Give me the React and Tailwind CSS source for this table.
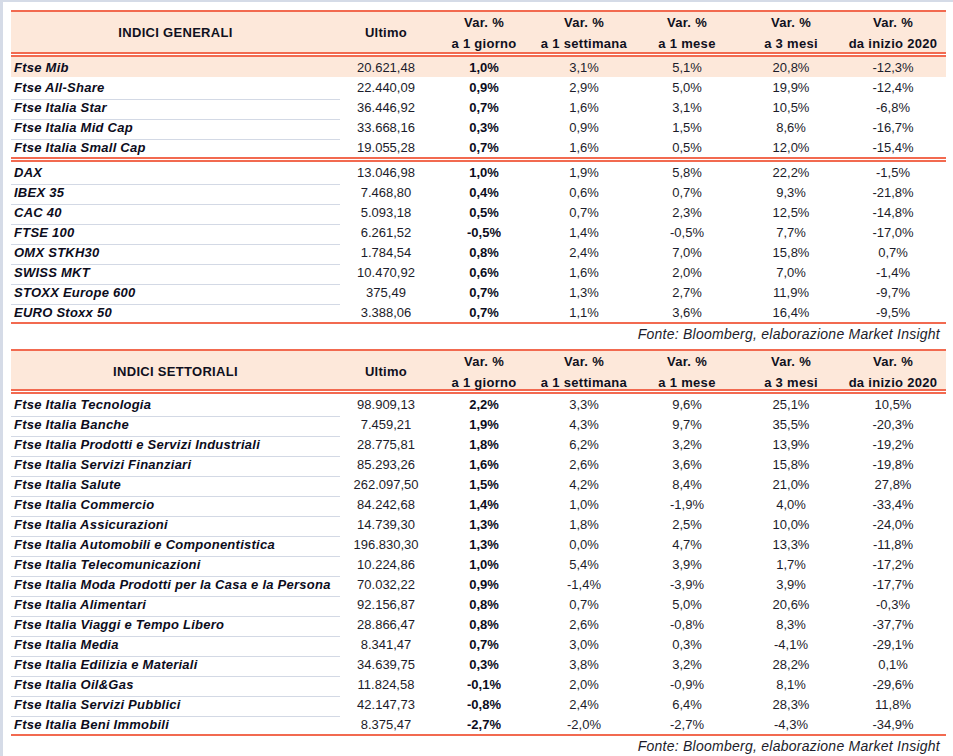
import React from 'react';

const cols = 'grid grid-cols-[329px_92px_104px_96px_110px_98px_106px]';

const generali = [
  ['Ftse Mib', '20.621,48', '1,0%', '3,1%', '5,1%', '20,8%', '-12,3%'],
  ['Ftse All-Share', '22.440,09', '0,9%', '2,9%', '5,0%', '19,9%', '-12,4%'],
  ['Ftse Italia Star', '36.446,92', '0,7%', '1,6%', '3,1%', '10,5%', '-6,8%'],
  ['Ftse Italia Mid Cap', '33.668,16', '0,3%', '0,9%', '1,5%', '8,6%', '-16,7%'],
  ['Ftse Italia Small Cap', '19.055,28', '0,7%', '1,6%', '0,5%', '12,0%', '-15,4%'],
];

const esteri = [
  ['DAX', '13.046,98', '1,0%', '1,9%', '5,8%', '22,2%', '-1,5%'],
  ['IBEX 35', '7.468,80', '0,4%', '0,6%', '0,7%', '9,3%', '-21,8%'],
  ['CAC 40', '5.093,18', '0,5%', '0,7%', '2,3%', '12,5%', '-14,8%'],
  ['FTSE 100', '6.261,52', '-0,5%', '1,4%', '-0,5%', '7,7%', '-17,0%'],
  ['OMX STKH30', '1.784,54', '0,8%', '2,4%', '7,0%', '15,8%', '0,7%'],
  ['SWISS MKT', '10.470,92', '0,6%', '1,6%', '2,0%', '7,0%', '-1,4%'],
  ['STOXX Europe 600', '375,49', '0,7%', '1,3%', '2,7%', '11,9%', '-9,7%'],
  ['EURO Stoxx 50', '3.388,06', '0,7%', '1,1%', '3,6%', '16,4%', '-9,5%'],
];

const settoriali = [
  ['Ftse Italia Tecnologia', '98.909,13', '2,2%', '3,3%', '9,6%', '25,1%', '10,5%'],
  ['Ftse Italia Banche', '7.459,21', '1,9%', '4,3%', '9,7%', '35,5%', '-20,3%'],
  ['Ftse Italia Prodotti e Servizi Industriali', '28.775,81', '1,8%', '6,2%', '3,2%', '13,9%', '-19,2%'],
  ['Ftse Italia Servizi Finanziari', '85.293,26', '1,6%', '2,6%', '3,6%', '15,8%', '-19,8%'],
  ['Ftse Italia Salute', '262.097,50', '1,5%', '4,2%', '8,4%', '21,0%', '27,8%'],
  ['Ftse Italia Commercio', '84.242,68', '1,4%', '1,0%', '-1,9%', '4,0%', '-33,4%'],
  ['Ftse Italia Assicurazioni', '14.739,30', '1,3%', '1,8%', '2,5%', '10,0%', '-24,0%'],
  ['Ftse Italia Automobili e Componentistica', '196.830,30', '1,3%', '0,0%', '4,7%', '13,3%', '-11,8%'],
  ['Ftse Italia Telecomunicazioni', '10.224,86', '1,0%', '5,4%', '3,9%', '1,7%', '-17,2%'],
  ['Ftse Italia Moda Prodotti per la Casa e la Persona', '70.032,22', '0,9%', '-1,4%', '-3,9%', '3,9%', '-17,7%'],
  ['Ftse Italia Alimentari', '92.156,87', '0,8%', '0,7%', '5,0%', '20,6%', '-0,3%'],
  ['Ftse Italia Viaggi e Tempo Libero', '28.866,47', '0,8%', '2,6%', '-0,8%', '8,3%', '-37,7%'],
  ['Ftse Italia Media', '8.341,47', '0,7%', '3,0%', '0,3%', '-4,1%', '-29,1%'],
  ['Ftse Italia Edilizia e Materiali', '34.639,75', '0,3%', '3,8%', '3,2%', '28,2%', '0,1%'],
  ['Ftse Italia Oil&Gas', '11.824,58', '-0,1%', '2,0%', '-0,9%', '8,1%', '-29,6%'],
  ['Ftse Italia Servizi Pubblici', '42.147,73', '-0,8%', '2,4%', '6,4%', '28,3%', '11,8%'],
  ['Ftse Italia Beni Immobili', '8.375,47', '-2,7%', '-2,0%', '-2,7%', '-4,3%', '-34,9%'],
];

const Header = ({ title, h, pad }) => {
  const subs = ['a 1 giorno', 'a 1 settimana', 'a 1 mese', 'a 3 mesi', 'da inizio 2020'];
  return (
    <div className={`${cols} ${h} bg-[#fde8da] text-[13px] font-bold tracking-[0.3px] text-[#101020]`}>
      <div className={`flex items-center justify-center ${pad}`}>{title}</div>
      <div className={`flex items-center justify-center ${pad}`}>Ultimo</div>
      {subs.map((s) => (
        <div key={s} className={`flex flex-col items-center justify-center leading-[21px] ${pad}`}>
          <span>Var. %</span>
          <span>{s}</span>
        </div>
      ))}
    </div>
  );
};

const DoubleLine = () => (
  <div>
    <div className="h-[2px] bg-[#f26a50]" />
    <div className="h-[1px] bg-white" />
    <div className="h-[2px] bg-[#f26a50]" />
  </div>
);

const Row = ({ r, last, hl }) => (
  <div className={`${cols} h-5 text-[13px] leading-[22px] text-[#1c1c2a] ${hl ? 'bg-[#fde8da]' : ''}`}>
    <div
      className={`pl-[3px] font-bold italic tracking-[0.25px] text-[#0c0c1c] whitespace-nowrap ${
        last || hl ? '' : 'border-b border-[#d3d9e5]'
      }`}
    >
      {r[0]}
    </div>
    <div className="text-center">{r[1]}</div>
    <div className="text-center font-bold text-[#0c0c1c]">{r[2]}</div>
    <div className="text-center">{r[3]}</div>
    <div className="text-center">{r[4]}</div>
    <div className="text-center">{r[5]}</div>
    <div className="text-center">{r[6]}</div>
  </div>
);

const Fonte = ({ h }) => (
  <div className={`${h} pr-[6px] text-right text-[14px] italic tracking-[0.25px] leading-[18px] text-[#1c1c2a]`}>
    Fonte: Bloomberg, elaborazione Market Insight
  </div>
);

export default function App() {
  return (
    <div
      className="w-[953px] h-[756px] overflow-hidden bg-white border-l-[3px] border-t-2 border-[#d5dbe7] pl-[8px] pt-[8px]"
      style={{ fontFamily: '"Liberation Sans", Arial, sans-serif' }}
    >
      <div className="w-[935px]">
        <div className="h-[2px] bg-[#f26a50]" />
        <Header title="INDICI GENERALI" h="h-[40px]" pad="pb-[1px]" />
        <DoubleLine />
        {generali.map((r, i) => (
          <Row key={r[0]} r={r} hl={i === 0} last={i === generali.length - 1} />
        ))}
        <DoubleLine />
        {esteri.map((r, i) => (
          <Row key={r[0]} r={r} last={i === esteri.length - 1} />
        ))}
        <div className="h-[2px] bg-[#f26a50]" />
        <Fonte h="h-[25px] pt-[1px]" />

        <div className="h-[2px] bg-[#f26a50]" />
        <Header title="INDICI SETTORIALI" h="h-[38px]" pad="pb-[3px]" />
        <DoubleLine />
        {settoriali.map((r, i) => (
          <Row key={r[0]} r={r} last={i === settoriali.length - 1} />
        ))}
        <div className="h-[2px] bg-[#f26a50]" />
        <Fonte h="h-[21px] pt-[1px]" />
      </div>
    </div>
  );
}
